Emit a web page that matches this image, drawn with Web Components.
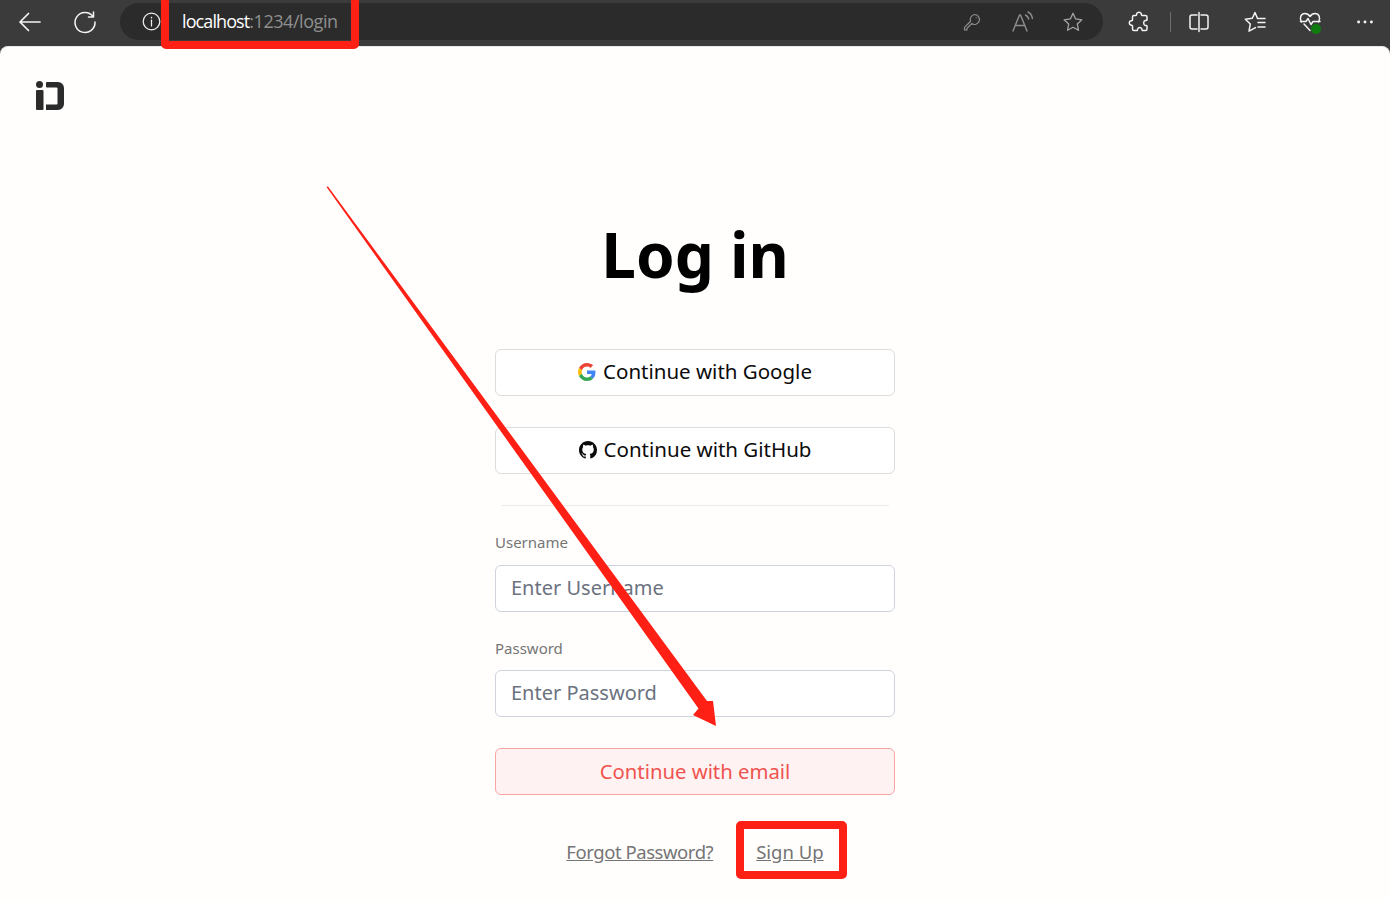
<!DOCTYPE html>
<html>
<head>
<meta charset="utf-8">
<title>Log in</title>
<style>
  html, body { margin: 0; height: 100%; background: #3b3b3b; overflow: hidden; }
  body { font-family: "Noto Sans", "Open Sans", sans-serif; position: relative; width: 1390px; height: 900px; }
</style>
</head>
<body>
<browser-frame>
  <login-page></login-page>
</browser-frame>
<red-marks></red-marks>

<script>
const line = 'fill="none" stroke="currentColor" stroke-linecap="round" stroke-linejoin="round"';

// toolbar icons, all on a 24 box
const icons = {
  back: `<path d="M2 12h20M10.500 3.500L2 12l8.500 8.500" ${line} stroke-width="1.7"/>`,
  reload: `<path d="M20 6.5A10 10 0 1 0 22 12M20.5 2v5h-5" ${line} stroke-width="1.5"/>`,
  info: `<circle cx="12" cy="12" r="9.5" ${line}/><path d="M12 10.5V17" ${line}/><circle cx="12" cy="7.6" r=".9" fill="currentColor"/>`,
  key: `<path d="M15 3a6 6 0 1 1-3.500 10.900L6 19.500V21.500H3v-3l7.300-7.400A6 6 0 0 1 15 3z" ${line}/><circle cx="17" cy="7" r=".8" fill="currentColor"/>`,
  read: `<path d="M2 21L8.500 5h1L16 21M4.500 15.500h9.500M14.500 5c1.800.9 2.800 2.300 3.200 4M17 2c2.600 1.300 4 3.500 4.400 6.500" ${line}/>`,
  star: `<path d="M12 2.500l2.900 6.200 6.800.9-5 4.600 1.300 6.800-6-3.300-6 3.300 1.300-6.800-5-4.600 6.800-.9z" ${line}/>`,
  puzzle: `<path d="M9.800 3.500c.7-1.800 3.700-1.800 4.400 0 .3.800 0 2 .8 2h3.500c.8 0 1.500.7 1.500 1.500v3c0 .7-1 .5-1.800.6-2 .5-2 4.300 0 4.800.8.100 1.800-.1 1.800.6v3c0 .8-.7 1.500-1.500 1.500h-3c-.7 0-.4-1-.7-1.700-.7-1.900-3.400-1.900-4.100 0-.3.700 0 1.700-.7 1.700H7c-.8 0-1.500-.7-1.500-1.500v-3.300c0-.7-1-.4-1.700-.7-2-.7-2-3.500 0-4.200.7-.3 1.700 0 1.700-.7V7c0-.8.700-1.500 1.500-1.500H9c.8 0 .5-1.200.8-2z" ${line} stroke-width="1.5"/>`,
  split: `<path d="M10 5H5a2 2 0 0 0-2 2v10a2 2 0 0 0 2 2h5M14 5h5a2 2 0 0 1 2 2v10a2 2 0 0 1-2 2h-5M12 2.500v19" ${line} stroke-width="1.5"/>`,
  favs: `<path d="M22 8.500h-7.500L12 2.500 9.300 8.200l-7 1 5 4.800-1.300 7.200 6.500-3.600M22 12.500h-7M22 17h-7" ${line} stroke-width="1.5"/>`,
  health: `<path d="M3.500 12C1 8 3 3.500 7 3.500c2.500 0 4 1.500 5 3 1-1.500 2.500-3 5-3 4 0 6 4.500 3.500 8.500M2.500 11.500H8l2-3 3 6 2-3h7M6 14l6 6.500" ${line} stroke-width="1.5"/>`,
  more: `<circle cx="5" cy="12" r="1.600" fill="currentColor"/><circle cx="12" cy="12" r="1.600" fill="currentColor"/><circle cx="19" cy="12" r="1.600" fill="currentColor"/>`
};

class ToolIcon extends HTMLElement {
  connectedCallback() {
    const size = this.getAttribute('size') || 22;
    const root = this.attachShadow({mode: 'open'});
    root.innerHTML = `
      <style>
        :host { display: inline-flex; flex: none; color: inherit; }
        svg { display: block; overflow: visible; }
      </style>
      <svg width="${size}" height="${size}" viewBox="0 0 24 24" stroke-width="1.4">${icons[this.getAttribute('name')]}</svg>
    `;
  }
}

class BrowserFrame extends HTMLElement {
  constructor() {
    super();
    const root = this.attachShadow({mode: 'open'});
    root.innerHTML = `
      <style>
        :host { display: flex; flex-direction: column; width: 1390px; height: 900px; color: #f4f4f4; }
        .bar { display: flex; align-items: flex-start; height: 46px; background: #3b3b3b; flex: none; box-sizing: border-box; padding-top: 3px; }
        .nav { display: flex; align-items: center; height: 37px; padding-left: 18px; gap: 31px; width: 120px; box-sizing: border-box; }
        .omni { display: flex; align-items: center; width: 983px; height: 37px; background: #2b2b2b; border-radius: 19px; box-sizing: border-box; padding: 0 19px 0 21px; color: #f0f0f0; }
        .url { margin-left: 20px; font: 18px/39px "Open Sans", "Noto Sans", sans-serif; letter-spacing: -.9px; color: #fff; white-space: nowrap; }
        .url span { color: #8f8f8f; letter-spacing: -.45px; }
        .site { margin-left: auto; display: flex; align-items: center; color: #8e8e8e; }
        .site .read { margin-left: 29px; }
        .site .star { margin-left: 27px; color: #a5a5a5; }
        .tools { display: flex; align-items: center; height: 37px; padding-left: 24px; }
        .sep { width: 1px; height: 20px; background: #6e6e6e; margin: 0 16px 0 19px; flex: none; }
        .favs { margin-left: 32px; }
        .health { position: relative; display: inline-flex; margin-left: 31px; }
        .health i { position: absolute; right: 1px; bottom: 0; width: 10px; height: 10px; border-radius: 50%; background: #107c10; }
        .more { margin-left: 32px; }
        .page { flex: 1; background: #fffefd; border-radius: 8px 8px 0 0; min-height: 0; border-top: 1px solid #e8e8e8; box-sizing: border-box; }
      </style>
      <div class="bar">
        <div class="nav">
          <tool-icon name="back" size="24"></tool-icon>
          <tool-icon name="reload" size="24"></tool-icon>
        </div>
        <div class="omni">
          <tool-icon name="info" size="21"></tool-icon>
          <div class="url">localhost<span>:1234/login</span></div>
          <div class="site">
            <tool-icon name="key" size="20"></tool-icon>
            <tool-icon class="read" name="read" size="24"></tool-icon>
            <tool-icon class="star" name="star" size="22"></tool-icon>
          </div>
        </div>
        <div class="tools">
          <tool-icon name="puzzle" size="24"></tool-icon>
          <div class="sep"></div>
          <tool-icon name="split" size="24"></tool-icon>
          <tool-icon class="favs" name="favs" size="24"></tool-icon>
          <span class="health"><tool-icon name="health" size="24"></tool-icon><i></i></span>
          <tool-icon class="more" name="more" size="22"></tool-icon>
        </div>
      </div>
      <div class="page"><slot></slot></div>
    `;
  }
}

class AuthButton extends HTMLElement {
  constructor() {
    super();
    const root = this.attachShadow({mode: 'open'});
    root.innerHTML = `
      <style>
        :host { display: flex; align-items: center; justify-content: center; gap: 7px; box-sizing: border-box; width: 400px; height: 47px; padding-bottom: 4px; border: 1px solid #dcdcdc; border-radius: 6px; background: #fff; color: #0b0b0b; font-size: 20.5px; white-space: nowrap; }
        :host([primary]) { background: #fef3f2; border-color: #f9a3a3; color: #ef5350; font-size: 20.3px; padding-bottom: 2px; }
        ::slotted(svg) { margin-top: 2px; }
      </style>
      <slot name="icon"></slot><slot></slot>
    `;
  }
}

class FormField extends HTMLElement {
  constructor() {
    super();
    const root = this.attachShadow({mode: 'open'});
    root.innerHTML = `
      <style>
        :host { display: block; width: 400px; }
        label { display: block; font-size: 15px; line-height: 20px; color: #757575; margin-bottom: var(--label-gap, 12px); }
        .box { box-sizing: border-box; height: 47px; line-height: 43px; border: 1px solid #cfd3dc; border-radius: 6px; background: #fff; padding: 0 15px; font-size: 20px; color: #6b7280; }
      </style>
      <label>${this.getAttribute('label')}</label>
      <div class="box">${this.getAttribute('placeholder')}</div>
    `;
  }
}

class LoginPage extends HTMLElement {
  constructor() {
    super();
    const root = this.attachShadow({mode: 'open'});
    root.innerHTML = `
      <style>
        :host { display: block; position: relative; height: 853px; overflow: hidden; }
        .logo { position: absolute; left: 35px; top: 33px; }
        main { display: flex; flex-direction: column; align-items: center; padding-top: 162px; }
        h1 { margin: 0 0 50px; font-size: 62px; line-height: 90px; font-weight: 700; color: #000; height: 90px; }
        .stack { display: flex; flex-direction: column; width: 400px; }
        hr { width: 388px; margin: 31px auto 26px; border: 0; border-top: 1px solid #ececec; }
        .links { display: flex; justify-content: center; gap: 43px; margin-top: 45px; font-size: 18.5px; line-height: 24px; color: #757575; text-decoration: underline; }
        .links span:first-child { letter-spacing: -.45px; }
        svg { display: block; }
      </style>
      <svg class="logo" width="30" height="30" viewBox="0 0 30 30">
        <circle cx="4.500" cy="4.500" r="3.500" fill="#2b2b2b"/>
        <rect x="1" y="10" width="7.500" height="20" rx="1" fill="#2b2b2b"/>
        <path d="M11 3a1 1 0 0 1 1-1h11a6 6 0 0 1 6 6v16a6 6 0 0 1-6 6H11v-5.500h10.500a1 1 0 0 0 1-1V8.500a1 1 0 0 0-1-1H12a1 1 0 0 1-1-1z" fill="#2b2b2b"/>
      </svg>
      <main>
        <h1>Log in</h1>
        <div class="stack">
          <auth-button>
            <svg slot="icon" width="18" height="18" viewBox="0 0 48 48">
              <path fill="#EA4335" d="M24 9.500c3.500 0 6.700 1.200 9.200 3.600l6.900-6.900C35.900 2.400 30.500 0 24 0 14.600 0 6.500 5.400 2.600 13.200l8 6.200C12.400 13.700 17.700 9.500 24 9.500z"/>
              <path fill="#4285F4" d="M46.500 24.500c0-1.600-.1-3.100-.4-4.500H24v9h12.700c-.6 2.900-2.200 5.400-4.700 7.100l7.700 6c4.500-4.200 6.800-10.300 6.800-17.600z"/>
              <path fill="#FBBC05" d="M10.500 28.600c-.5-1.400-.8-3-.8-4.600s.3-3.200.8-4.600l-8-6.200C.9 16.500 0 20.100 0 24s.9 7.500 2.600 10.800z"/>
              <path fill="#34A853" d="M24 48c6.500 0 11.900-2.100 15.900-5.900l-7.700-6c-2.200 1.400-4.900 2.300-8.200 2.300-6.300 0-11.600-4.200-13.500-9.900l-8 6.200C6.500 42.600 14.600 48 24 48z"/>
            </svg>
            Continue with Google
          </auth-button>
          <auth-button style="margin-top:31px">
            <svg slot="icon" width="18" height="18" viewBox="0 0 16 16">
              <path fill="#0b0b0b" d="M8 0C3.580 0 0 3.580 0 8c0 3.540 2.290 6.530 5.470 7.590.4.070.55-.17.550-.38 0-.19-.010-.82-.010-1.490-2.010.370-2.530-.490-2.690-.940-.090-.230-.480-.940-.820-1.130-.280-.150-.680-.520-.010-.530.630-.010 1.080.580 1.230.820.720 1.210 1.870.870 2.330.660.070-.520.280-.870.510-1.070-1.780-.200-3.640-.890-3.640-3.950 0-.870.310-1.590.820-2.150-.080-.200-.360-1.020.080-2.120 0 0 .670-.210 2.200.820.640-.180 1.320-.270 2-.270s1.360.090 2 .270c1.530-1.040 2.200-.820 2.200-.820.440 1.100.160 1.920.080 2.120.510.560.820 1.270.820 2.150 0 3.070-1.870 3.750-3.650 3.950.290.250.540.730.540 1.480 0 1.070-.010 1.930-.010 2.200 0 .210.150.460.550.380A8.010 8.010 0 0 0 16 8c0-4.420-3.580-8-8-8z"/>
            </svg>
            Continue with GitHub
          </auth-button>
          <hr>
          <form-field style="--label-gap:13px" label="Username" placeholder="Enter Username"></form-field>
          <form-field style="margin-top:26px" label="Password" placeholder="Enter Password"></form-field>
          <auth-button primary style="margin-top:31px">Continue with email</auth-button>
          <div class="links"><span>Forgot Password?</span><span>Sign Up</span></div>
        </div>
      </main>
    `;
  }
}

// the reviewer's red annotations, drawn over the screenshot
class RedMarks extends HTMLElement {
  constructor() {
    super();
    const root = this.attachShadow({mode: 'open'});
    root.innerHTML = `
      <style>
        :host { position: absolute; inset: 0; pointer-events: none; }
        .box { position: absolute; box-sizing: border-box; border: 8px solid #ff2015; border-radius: 5px; }
        svg { position: absolute; inset: 0; }
      </style>
      <div class="box" style="left:161px;top:-8px;width:198px;height:57px"></div>
      <div class="box" style="left:736px;top:821px;width:111px;height:58px"></div>
      <svg width="1390" height="900" viewBox="0 0 1390 900">
        <polygon fill="#ff2015" points="326.500,187 328,186.500 707,701 713,701 716,726 693,715 698.500,708.500"/>
      </svg>
    `;
  }
}

customElements.define('tool-icon', ToolIcon);
customElements.define('browser-frame', BrowserFrame);
customElements.define('auth-button', AuthButton);
customElements.define('form-field', FormField);
customElements.define('login-page', LoginPage);
customElements.define('red-marks', RedMarks);
</script>
</body>
</html>
